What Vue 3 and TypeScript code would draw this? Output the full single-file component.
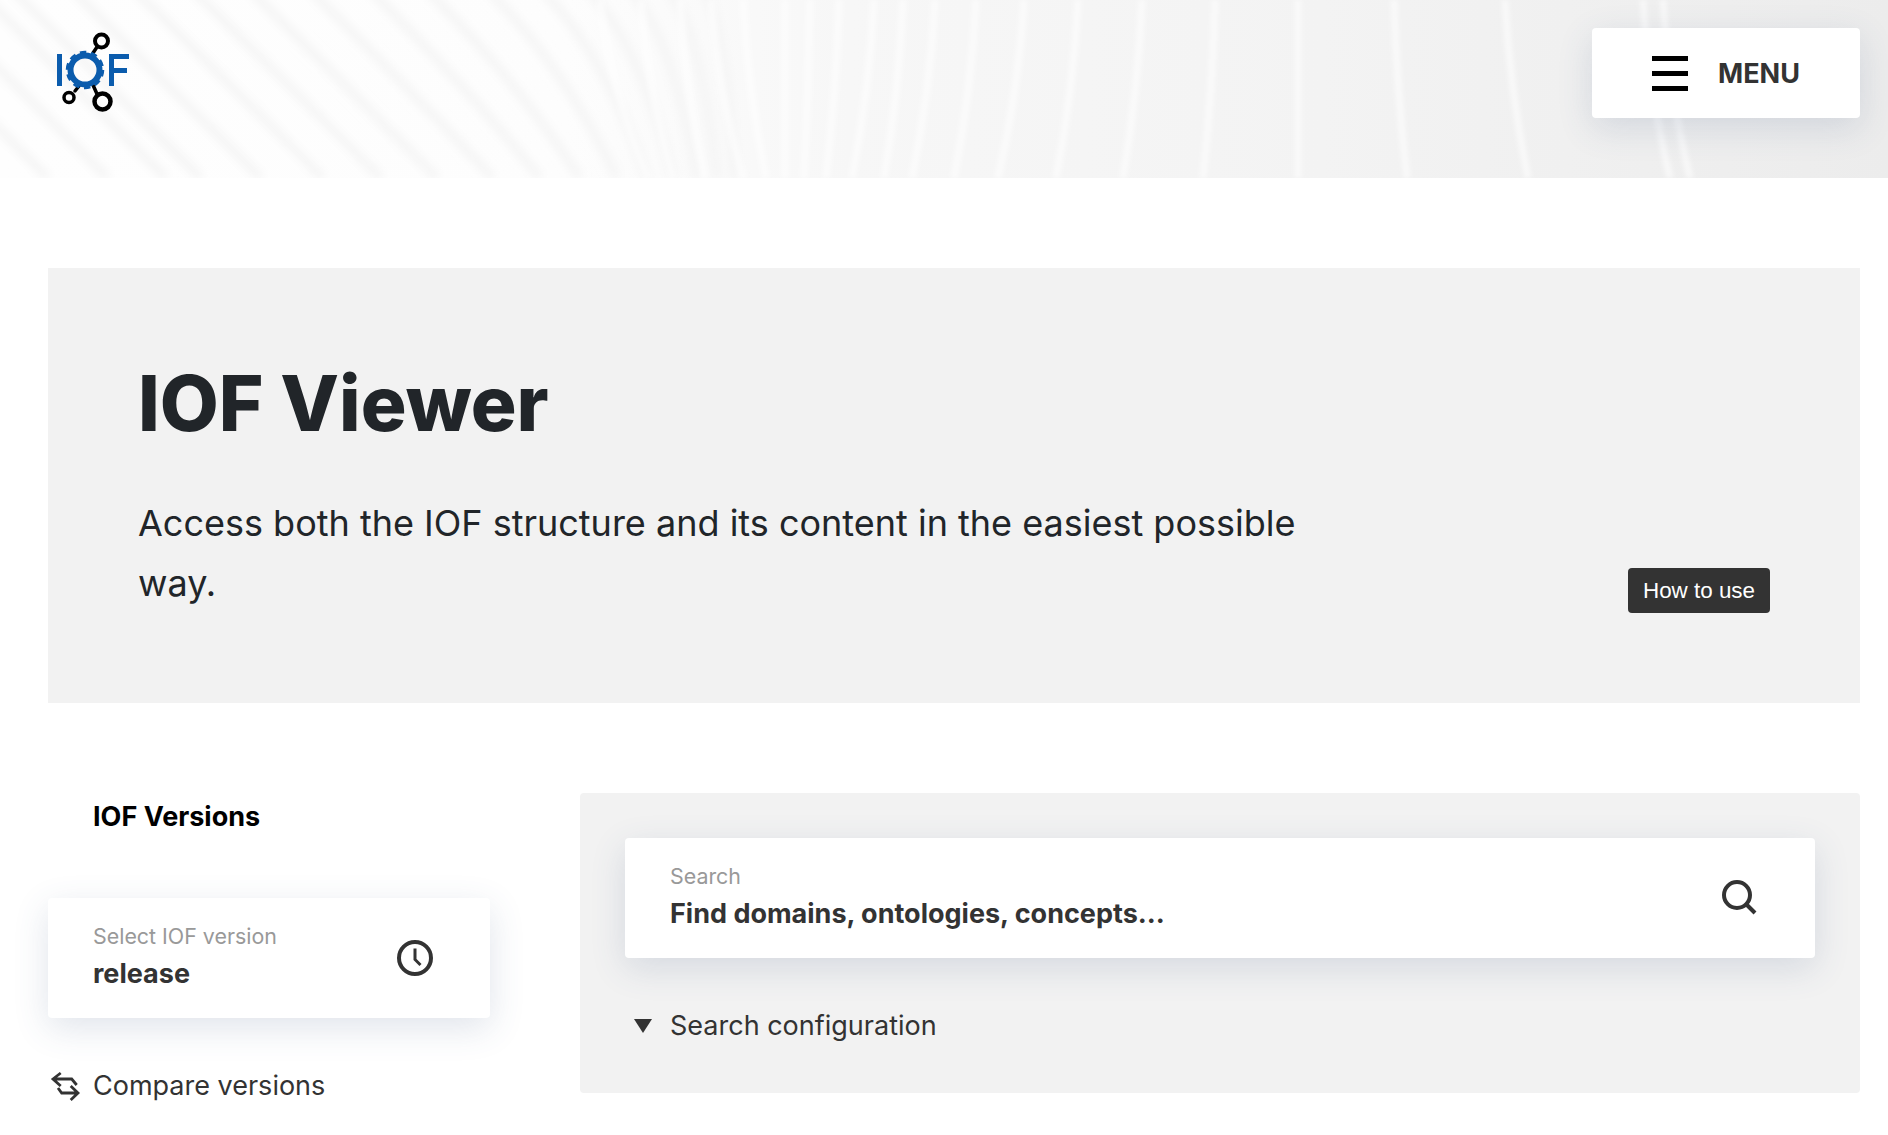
<script setup lang="ts">
// shadow bands of the header picture, as [x at top, x at bottom]
const bands: [number, number][] = [
  [-190, -12], [-130, 48], [-70, 108], [-12, 166], [23, 201], [83, 261], [145, 323], [203, 381],
  [260, 437], [320, 493], [380, 540], [437, 580], [498, 617], [552, 647], [598, 673], [640, 697],
  [678, 717], [713, 735],
]
// light streaks further right
const streaks: [number, number][] = [
  [600, 648], [641, 673], [680, 705], [711, 743], [743, 766], [785, 785], [810, 804], [839, 826],
  [874, 852], [903, 884], [935, 912], [976, 954], [1024, 998], [1078, 1056], [1142, 1123],
  [1215, 1203], [1298, 1298], [1394, 1407], [1505, 1528], [1643, 1670], [1663, 1690],
]

const bandPath = ([t, b]: [number, number]) => {
  const k = (b - t) * 0.55
  return `M${t - 12} -12 Q${t + k} ${k} ${b} 178`
}
const streakPath = ([t, b]: [number, number]) => `M${t} 0 Q${t + (b - t) * 0.2} 89 ${b} 178`
</script>

<template>
  <div class="page">
    <header class="top">
      <svg class="top-art" width="1888" height="178" viewBox="0 0 1888 178" aria-hidden="true">
        <defs>
          <linearGradient id="artFade" x1="0" x2="1" y1="0" y2="0">
            <stop offset="0" stop-color="#fefefe" />
            <stop offset="0.3" stop-color="#fdfdfd" />
            <stop offset="0.45" stop-color="#f7f7f7" />
            <stop offset="0.7" stop-color="#f3f3f3" />
            <stop offset="1" stop-color="#ececec" />
          </linearGradient>
          <filter id="softDark"><feGaussianBlur stdDeviation="4" /></filter>
          <filter id="softLight"><feGaussianBlur stdDeviation="2" /></filter>
        </defs>
        <rect width="1888" height="178" fill="url(#artFade)" />
        <g fill="none" filter="url(#softDark)">
          <path v-for="(b, i) in bands" :key="i" :d="bandPath(b)" stroke="#f5f5f5" stroke-width="9" />
        </g>
        <g fill="none" filter="url(#softLight)">
          <path v-for="(s, i) in streaks" :key="i" :d="streakPath(s)" stroke="#ffffff" stroke-opacity="0.55" stroke-width="7" />
        </g>
      </svg>

      <a class="logo" href="#" aria-label="IOF">
        <svg width="76" height="85" viewBox="0 0 76 85">
          <g fill="none" stroke="#000" stroke-linecap="round">
            <circle cx="46.5" cy="10" r="6.5" stroke-width="4" />
            <circle cx="14" cy="66.5" r="5" stroke-width="3.5" />
            <circle cx="47.5" cy="70.5" r="8" stroke-width="4.5" />
            <path d="M42 16 L38 22 M20 60 L24 55 M38 54 L42 63" stroke-width="3.5" />
          </g>
          <g fill="#0b5cad">
            <rect x="2" y="23" width="5" height="32" />
            <path d="M54 23h20v5h-15v9h13v5h-13v13h-5z" />
          </g>
          <circle cx="30" cy="39" r="14.5" fill="none" stroke="#0b5cad" stroke-width="6" />
          <circle cx="30" cy="39" r="18" fill="none" stroke="#0b5cad" stroke-width="2.5" stroke-dasharray="6.5 4.8" />
        </svg>
      </a>

      <button class="menu-btn" type="button">
        <span class="burger"><i></i><i></i><i></i></span>
        <span class="menu-label">MENU</span>
      </button>
    </header>

    <section class="hero">
      <h1>IOF Viewer</h1>
      <div class="hero-row">
        <p>Access both the IOF structure and its content in the easiest possible way.</p>
        <button class="how-btn" type="button">How to use</button>
      </div>
    </section>

    <main class="content">
      <aside class="versions">
        <h2>IOF Versions</h2>
        <div class="field version-field">
          <div class="field-text">
            <span class="field-label">Select IOF version</span>
            <span class="field-value">release</span>
          </div>
          <svg width="38" height="38" viewBox="0 0 38 38" fill="none" stroke="#333" stroke-width="4">
            <circle cx="19" cy="19" r="16" />
            <path d="M19 9.5V20.5l5.5 5.5" stroke-width="3" />
          </svg>
        </div>
        <a class="compare" href="#">
          <svg width="30" height="30" viewBox="0 0 30 30" fill="none" stroke="#333" stroke-width="2.8">
            <path d="M10.7 2L3 8l7.7 7M3 8h18.7l5 6" />
            <path d="M20.7 15L28 22l-7.3 7M28 22H11.7L8 17" />
          </svg>
          <span>Compare versions</span>
        </a>
      </aside>

      <section class="search-panel">
        <div class="field search-field">
          <div class="field-text">
            <span class="field-label">Search</span>
            <span class="field-value">Find domains, ontologies, concepts...</span>
          </div>
          <svg width="38" height="38" viewBox="0 0 38 38" fill="none" stroke="#333" stroke-width="4">
            <circle cx="16" cy="16" r="13" />
            <path d="M26 26l8 8" />
          </svg>
        </div>
        <div class="config">
          <span class="caret"></span>
          <span>Search configuration</span>
        </div>
      </section>
    </main>
  </div>
</template>

<style>
html,
body {
  margin: 0;
  background: #fff;
}
</style>

<style scoped>
.page {
  width: 1888px;
  font-family: Inter, 'Liberation Sans', sans-serif;
  color: #333;
}

.top {
  position: relative;
  height: 178px;
  padding: 28px 28px 0 55px;
  box-sizing: border-box;
  display: flex;
  justify-content: space-between;
  align-items: flex-start;
  overflow: hidden;
}

.top-art {
  position: absolute;
  top: 0;
  left: 0;
}

.logo {
  position: relative;
  display: block;
  height: 85px;
  margin-top: 3px;
}

.menu-btn {
  position: relative;
  width: 268px;
  height: 90px;
  padding: 0 0 0 60px;
  border: 0;
  border-radius: 4px;
  background: #fff;
  box-shadow: 0 10px 35px rgba(60, 90, 130, 0.16);
  display: flex;
  align-items: center;
  gap: 30px;
  font-family: inherit;
  cursor: pointer;
}

.burger {
  width: 36px;
  display: flex;
  flex-direction: column;
  gap: 10px;
}

.burger i {
  display: block;
  height: 5px;
  background: #000;
}

.menu-label {
  font-size: 27px;
  font-weight: 700;
  color: #333;
}

.hero {
  margin: 90px 28px 0 48px;
  height: 435px;
  padding: 95px 90px 0;
  box-sizing: border-box;
  background: #f2f2f2;
}

.hero h1 {
  margin: 0;
  font-size: 76.4px;
  line-height: 80px;
  font-weight: 800;
  color: #212529;
}

.hero-row {
  margin-top: 50px;
  display: flex;
  justify-content: space-between;
  align-items: flex-end;
}

.hero-row p {
  margin: 0;
  width: 1200px;
  font-size: 36px;
  line-height: 60px;
  color: #212529;
}

.how-btn {
  height: 45px;
  width: 142px;
  padding: 0;
  border: 0;
  border-radius: 4px;
  background: #333;
  color: #fff;
  font-family: 'Liberation Sans', Arial, sans-serif;
  font-size: 22.4px;
  cursor: pointer;
}

.content {
  margin: 90px 28px 0 48px;
  display: grid;
  grid-template-columns: 442px 1280px;
  justify-content: space-between;
  align-items: start;
}

.versions h2 {
  margin: 8px 0 0 45px;
  font-size: 27px;
  line-height: 32px;
  font-weight: 700;
  color: #000;
}

.field {
  height: 120px;
  box-sizing: border-box;
  padding: 0 56px 0 45px;
  border-radius: 4px;
  background: #fff;
  box-shadow: 0 10px 35px rgba(60, 90, 130, 0.16);
  display: flex;
  justify-content: space-between;
  align-items: center;
}

.field-text {
  padding-bottom: 4px;
  display: flex;
  flex-direction: column;
  gap: 8px;
}

.field-label {
  font-size: 21.4px;
  line-height: 28px;
  color: #999;
}

.field-value {
  font-size: 27px;
  line-height: 32px;
  font-weight: 700;
  color: #333;
}

.version-field {
  margin-top: 65px;
}

.compare {
  margin-top: 51px;
  display: flex;
  align-items: center;
  gap: 13px;
  padding-left: 2px;
  font-size: 27px;
  line-height: 34px;
  color: #333;
  text-decoration: none;
}

.search-panel {
  height: 300px;
  box-sizing: border-box;
  padding: 45px;
  border-radius: 4px;
  background: #f2f2f2;
}

.config {
  margin-top: 51px;
  padding-left: 9px;
  display: flex;
  align-items: center;
  gap: 18px;
  font-size: 27px;
  line-height: 34px;
}

.caret {
  width: 0;
  height: 0;
  border-style: solid;
  border-width: 14px 9px 0;
  border-color: #333 transparent transparent;
}
</style>
